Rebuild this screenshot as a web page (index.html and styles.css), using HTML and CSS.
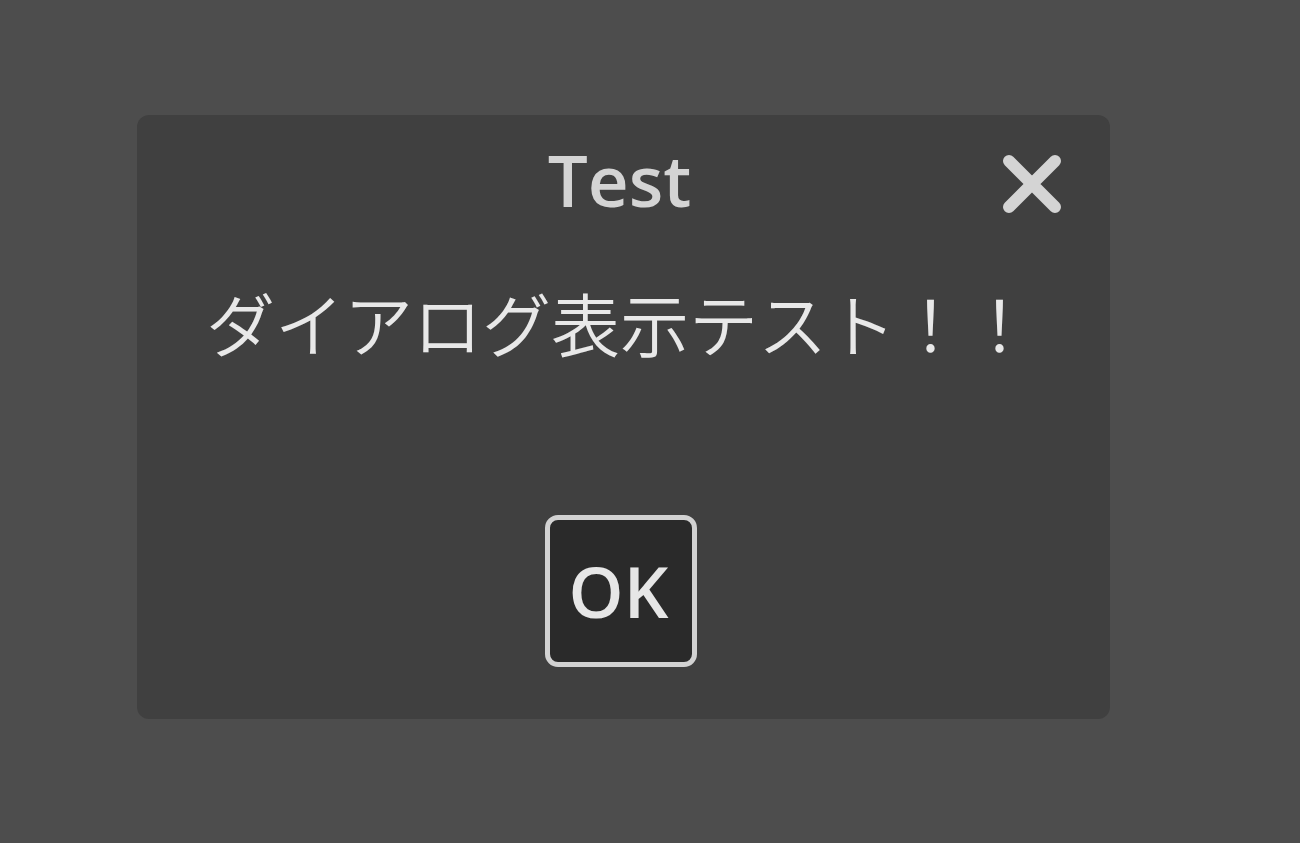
FILE: index.html
```html
<!DOCTYPE html>
<html lang="ja">
<head>
<meta charset="utf-8">
<link rel="stylesheet" href="styles.css">
</head>
<body>
<div class="dialog">
  <div class="titlebar">
    <div class="spacer"></div>
    <div class="title">Test</div>
    <div class="close-wrap">
      <svg class="close" width="62" height="62" viewBox="0 0 62 62">
        <path d="M8 8 L54 54 M54 8 L8 54" stroke="#d4d4d4" stroke-width="12" stroke-linecap="round" fill="none"/>
      </svg>
    </div>
  </div>
  <div class="content">
    <div class="message">ダイアログ表示テスト！！</div>
    <div class="actions">
      <button class="ok">OK</button>
    </div>
  </div>
</div>
</body>
</html>
```
FILE: styles.css
```css
html, body {
  margin: 0;
  padding: 0;
  background: #4d4d4d;
  width: 1300px;
  height: 843px;
  overflow: hidden;
}
body {
  padding: 115px 0 0 137px;
  box-sizing: border-box;
}
.dialog {
  width: 973px;
  height: 604px;
  background: #404040;
  border-radius: 12px;
  display: flex;
  flex-direction: column;
}
.titlebar {
  height: 142px;
  display: grid;
  grid-template-columns: 1fr auto 1fr;
  align-items: start;
}
.title {
  font-family: "Open Sans", "Noto Sans", sans-serif;
  font-weight: 600;
  font-size: 71px;
  line-height: 1;
  color: #d4d4d4;
  padding-top: 29px;
  margin-left: -8px;
}
.close-wrap {
  justify-self: end;
}
.close {
  display: block;
  margin-top: 38px;
  margin-right: 47px;
}
.content {
  flex: 1;
  margin: 0 37px 29px 37px;
  display: flex;
  flex-direction: column;
}
.message {
  font-family: "Noto Sans CJK JP", sans-serif;
  font-weight: 350;
  font-size: 69px;
  line-height: 1;
  color: #e8e8e8;
  padding: 31px 0 0 32px;
  white-space: nowrap;
}
.actions {
  margin-top: auto;
  display: flex;
  justify-content: center;
  padding-bottom: 23px;
}
.ok {
  width: 152px;
  height: 152px;
  box-sizing: border-box;
  background: #2a2a2a;
  border: 5px solid #d2d2d2;
  border-radius: 13px;
  color: #e6e6e6;
  font-family: "Open Sans", "Noto Sans", sans-serif;
  font-weight: 600;
  font-size: 70px;
  padding: 0 5px 0 0;
  margin-left: -5px;
}
```
